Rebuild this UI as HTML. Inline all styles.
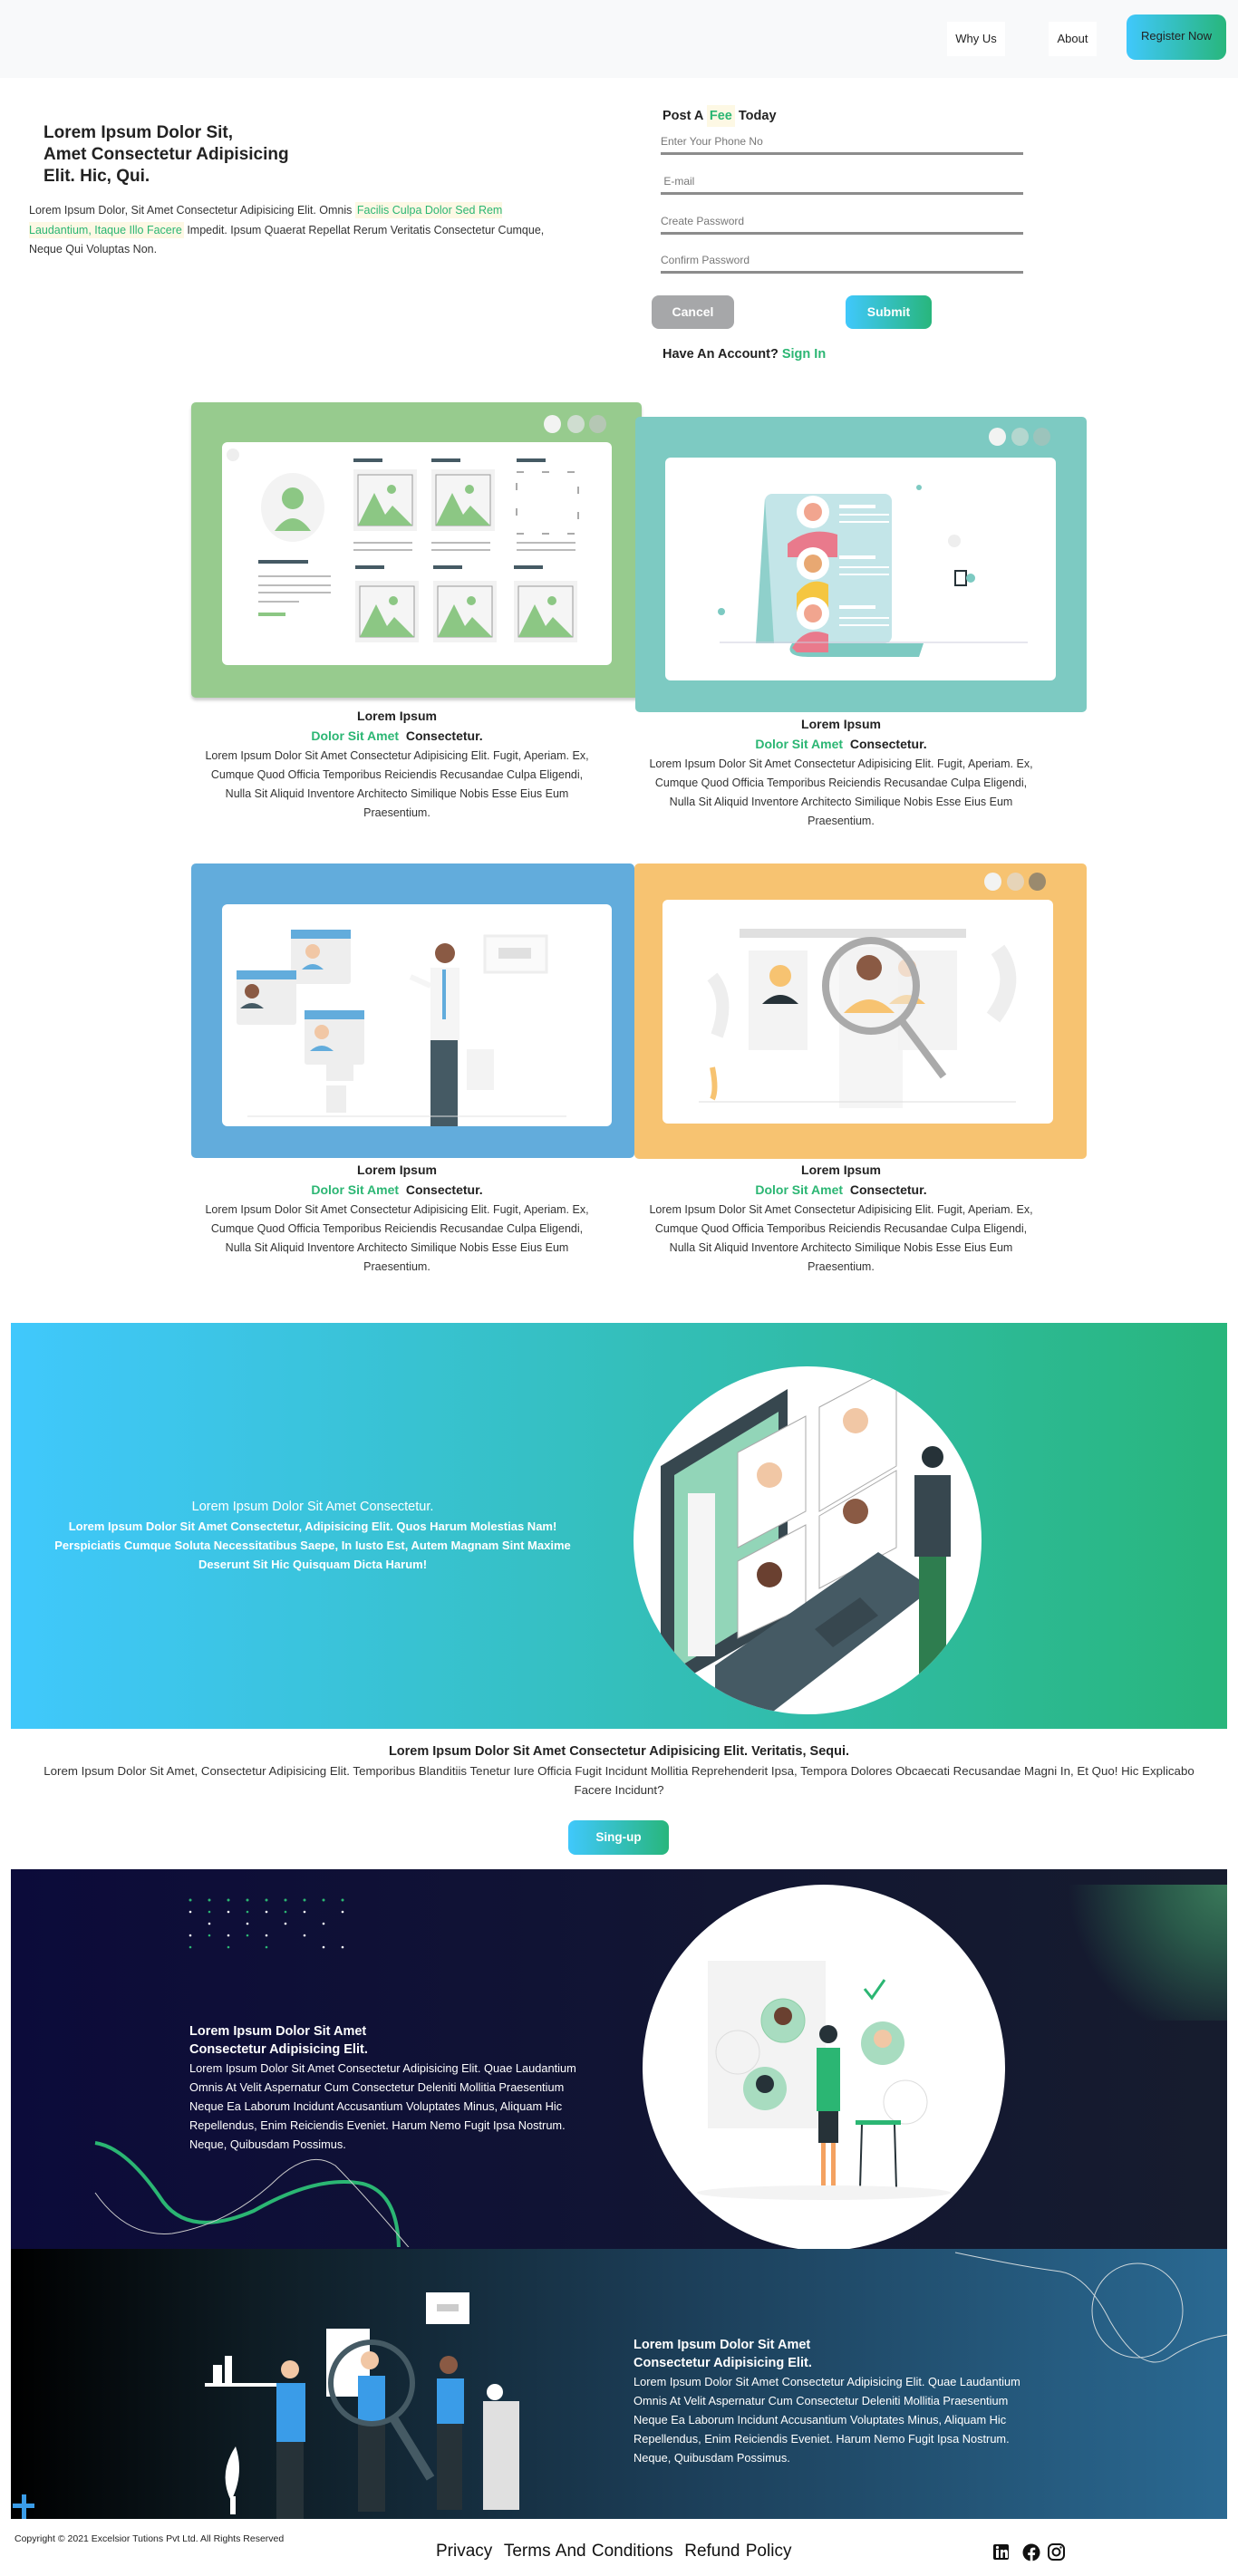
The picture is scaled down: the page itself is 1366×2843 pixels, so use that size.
<!DOCTYPE html>
<html><head><meta charset="utf-8"><style>
*{margin:0;padding:0;box-sizing:border-box}
body{width:1366px;height:2843px;position:relative;font-family:"Liberation Sans",sans-serif;color:#222;background:#fff;overflow:hidden}
.a{position:absolute}
.grad{background:linear-gradient(90deg,#40c8fc,#28b67c)}
.green{color:#2bb673}
.hl{background:#fdf8e4}
.ct{text-align:center;font-size:12.5px;line-height:21px;color:#333}
.ct b{font-size:14px;color:#222}
.card{position:absolute;border-radius:5px}
.inner{position:absolute;background:#fff;border-radius:6px}
.dot{position:absolute;width:19px;height:20px;border-radius:50%}
.lbl{position:absolute;left:729px;width:400px;font-size:12px;color:#777;border-bottom:3px solid #8c8c8c;height:22px}
</style></head><body>
<!-- header -->
<div class="a" style="left:0;top:0;width:1366px;height:86px;background:#f8f9fa"></div>
<div class="a" style="left:1045px;top:24px;width:64px;height:38px;background:#fff;font-size:13px;line-height:38px;text-align:center">Why Us</div>
<div class="a" style="left:1157px;top:24px;width:53px;height:38px;background:#fff;font-size:13px;line-height:38px;text-align:center">About</div>
<div class="a grad" style="left:1243px;top:16px;width:110px;height:50px;border-radius:10px;font-size:13px;line-height:48px;text-align:center">Register Now</div>

<!-- hero -->
<div class="a" style="left:48px;top:135px;font-size:19px;font-weight:bold;line-height:24px;color:#222">Lorem Ipsum Dolor Sit,<br>Amet Consectetur Adipisicing<br>Elit. Hic, Qui.</div>
<div class="a" style="left:32px;top:222px;width:590px;font-size:12.5px;line-height:21.5px;color:#333">Lorem Ipsum Dolor, Sit Amet Consectetur Adipisicing Elit. Omnis <span class="green hl" style="padding:2px">Facilis Culpa Dolor Sed Rem Laudantium, Itaque Illo Facere</span> Impedit. Ipsum Quaerat Repellat Rerum Veritatis Consectetur Cumque, Neque Qui Voluptas Non.</div>

<div class="a" style="left:731px;top:118px;font-size:14.5px;font-weight:bold;line-height:20px">Post A <span class="green hl" style="padding:4px 3px">Fee</span> Today</div>
<div class="lbl" style="top:149px">Enter Your Phone No</div>
<div class="lbl" style="top:193px">&nbsp;E-mail</div>
<div class="lbl" style="top:237px">Create Password</div>
<div class="lbl" style="top:280px">Confirm Password</div>
<div class="a" style="left:719px;top:326px;width:91px;height:37px;border-radius:8px;background:#a6a7a9;color:#fff;font-weight:bold;font-size:14px;line-height:37px;text-align:center">Cancel</div>
<div class="a grad" style="left:933px;top:326px;width:95px;height:37px;border-radius:8px;color:#fff;font-weight:bold;font-size:14px;line-height:37px;text-align:center">Submit</div>
<div class="a" style="left:731px;top:383px;font-size:14.5px;font-weight:bold">Have An Account? <span class="green">Sign In</span></div>

<!-- card 1 -->
<div class="card" style="left:211px;top:444px;width:497px;height:326px;background:#97cb8e;box-shadow:0 3px 3px #ccc"></div>
<div class="dot" style="left:600px;top:458px;background:#f2f3f2"></div><div class="dot" style="left:626px;top:458px;background:#cfddd0"></div><div class="dot" style="left:650px;top:458px;background:#b5c7b4"></div>
<div class="inner" style="left:245px;top:488px;width:430px;height:246px">
<svg width="430" height="246">
<circle cx="12" cy="14" r="7" fill="#eee"/>
<ellipse cx="78" cy="72" rx="35" ry="38" fill="#f3f3f3"/><circle cx="78" cy="62" r="12" fill="#8cc784"/><path d="M58 98 Q78 70 98 98 Z" fill="#8cc784"/>
<rect x="40" y="130" width="55" height="4" fill="#455a64"/><rect x="40" y="147" width="80" height="2" fill="#bbb"/><rect x="40" y="157" width="80" height="2" fill="#bbb"/><rect x="40" y="165" width="80" height="2" fill="#bbb"/><rect x="40" y="175" width="45" height="2" fill="#bbb"/><rect x="40" y="188" width="30" height="4" fill="#8cc784"/>
<g fill="#455a64"><rect x="145" y="18" width="32" height="4"/><rect x="231" y="18" width="32" height="4"/><rect x="325" y="18" width="32" height="4"/><rect x="147" y="136" width="32" height="4"/><rect x="233" y="136" width="32" height="4"/><rect x="322" y="136" width="32" height="4"/></g>
<g><rect x="145" y="30" width="70" height="68" fill="#f2f2f2"/><rect x="150" y="36" width="60" height="56" fill="#f5f5f5" stroke="#999"/><path d="M150 92 L168 56 L180 80 L188 70 L210 92Z" fill="#8cc784"/><circle cx="187" cy="52" r="5" fill="#8cc784"/></g>
<g transform="translate(86,0)"><rect x="145" y="30" width="70" height="68" fill="#f2f2f2"/><rect x="150" y="36" width="60" height="56" fill="#f5f5f5" stroke="#999"/><path d="M150 92 L168 56 L180 80 L188 70 L210 92Z" fill="#8cc784"/><circle cx="187" cy="52" r="5" fill="#8cc784"/></g>
<rect x="325" y="33" width="68" height="68" fill="none" stroke="#555" stroke-dasharray="8 20"/>
<g transform="translate(2,123)"><rect x="145" y="30" width="70" height="68" fill="#f2f2f2"/><rect x="150" y="36" width="60" height="56" fill="#f5f5f5" stroke="#999"/><path d="M150 92 L168 56 L180 80 L188 70 L210 92Z" fill="#8cc784"/><circle cx="187" cy="52" r="5" fill="#8cc784"/></g>
<g transform="translate(88,123)"><rect x="145" y="30" width="70" height="68" fill="#f2f2f2"/><rect x="150" y="36" width="60" height="56" fill="#f5f5f5" stroke="#999"/><path d="M150 92 L168 56 L180 80 L188 70 L210 92Z" fill="#8cc784"/><circle cx="187" cy="52" r="5" fill="#8cc784"/></g>
<g transform="translate(177,123)"><rect x="145" y="30" width="70" height="68" fill="#f2f2f2"/><rect x="150" y="36" width="60" height="56" fill="#f5f5f5" stroke="#999"/><path d="M150 92 L168 56 L180 80 L188 70 L210 92Z" fill="#8cc784"/><circle cx="187" cy="52" r="5" fill="#8cc784"/></g>
<g fill="#bbb"><rect x="145" y="110" width="65" height="2"/><rect x="145" y="118" width="65" height="2"/><rect x="231" y="110" width="65" height="2"/><rect x="231" y="118" width="65" height="2"/><rect x="325" y="110" width="65" height="2"/><rect x="325" y="118" width="65" height="2"/></g>
</svg></div>
<div class="a ct" style="left:223px;top:780px;width:430px"><b>Lorem Ipsum</b><br><b><span class="green">Dolor Sit Amet</span> &nbsp;Consectetur.</b><br>Lorem Ipsum Dolor Sit Amet Consectetur Adipisicing Elit. Fugit, Aperiam. Ex, Cumque Quod Officia Temporibus Reiciendis Recusandae Culpa Eligendi, Nulla Sit Aliquid Inventore Architecto Similique Nobis Esse Eius Eum Praesentium.</div>

<!-- card 2 -->
<div class="card" style="left:701px;top:460px;width:498px;height:326px;background:#7dcac2"></div>
<div class="dot" style="left:1091px;top:472px;background:#f2f3f2"></div><div class="dot" style="left:1116px;top:472px;background:#b4d7cf"></div><div class="dot" style="left:1140px;top:472px;background:#9cc4bc"></div>
<div class="inner" style="left:734px;top:505px;width:431px;height:246px">
<svg width="431" height="246">
<rect x="110" y="40" width="140" height="165" rx="8" fill="#c3e5e8"/><path d="M110 45 L100 205 L120 205Z" fill="#8fd0cb"/><path d="M140 205 Q130 220 160 220 L280 220 L285 205Z" fill="#7dcac2"/>
<circle cx="163" cy="60" r="18" fill="#fff"/><circle cx="163" cy="60" r="10" fill="#f1a58f"/><path d="M135 95 Q160 75 190 85 L190 110 L135 110Z" fill="#e97a8c"/>
<circle cx="163" cy="117" r="18" fill="#fff"/><circle cx="163" cy="117" r="10" fill="#e8a872"/><path d="M145 150 Q160 130 180 140 L180 170 L145 170Z" fill="#f5c641"/>
<circle cx="163" cy="172" r="18" fill="#fff"/><circle cx="163" cy="172" r="10" fill="#f1a58f"/><path d="M140 210 Q155 185 180 195 L180 215 L145 215Z" fill="#e97a8c"/>
<g fill="#fff"><rect x="192" y="52" width="40" height="4"/><rect x="192" y="62" width="55" height="2"/><rect x="192" y="70" width="55" height="2"/><rect x="192" y="108" width="40" height="4"/><rect x="192" y="120" width="55" height="2"/><rect x="192" y="128" width="55" height="2"/><rect x="192" y="163" width="40" height="4"/><rect x="192" y="176" width="55" height="2"/><rect x="192" y="184" width="55" height="2"/></g>
<rect x="258" y="65" width="14" height="15" fill="none" stroke="#fff" stroke-width="2"/><rect x="258" y="120" width="14" height="15" fill="none" stroke="#fff" stroke-width="2"/><rect x="258" y="175" width="14" height="15" fill="none" stroke="#fff" stroke-width="2"/>
<line x1="60" y1="204" x2="400" y2="204" stroke="#ccd" /><circle cx="62" cy="170" r="4" fill="#7dcac2"/><circle cx="280" cy="33" r="3" fill="#7dcac2"/><circle cx="319" cy="92" r="7" fill="#eee"/><rect x="320" y="125" width="12" height="16" fill="#fff" stroke="#263238" stroke-width="2"/><circle cx="337" cy="133" r="5" fill="#7dcac2"/>
</svg></div>
<div class="a ct" style="left:713px;top:789px;width:430px"><b>Lorem Ipsum</b><br><b><span class="green">Dolor Sit Amet</span> &nbsp;Consectetur.</b><br>Lorem Ipsum Dolor Sit Amet Consectetur Adipisicing Elit. Fugit, Aperiam. Ex, Cumque Quod Officia Temporibus Reiciendis Recusandae Culpa Eligendi, Nulla Sit Aliquid Inventore Architecto Similique Nobis Esse Eius Eum Praesentium.</div>

<!-- card 3 -->
<div class="card" style="left:211px;top:953px;width:489px;height:325px;background:#62acdc"></div>
<div class="inner" style="left:245px;top:998px;width:430px;height:245px">
<svg width="430" height="245">
<g><rect x="76" y="28" width="66" height="60" rx="3" fill="#eee"/><rect x="76" y="28" width="66" height="10" fill="#62acdc"/><circle cx="100" cy="52" r="8" fill="#f1c7a5"/><path d="M88 72 Q100 60 112 72Z" fill="#62acdc"/></g>
<g><rect x="16" y="73" width="66" height="60" rx="3" fill="#eee"/><rect x="16" y="73" width="66" height="10" fill="#62acdc"/><circle cx="33" cy="96" r="8" fill="#8a5a44"/><path d="M20 115 Q33 103 46 115Z" fill="#455a64"/></g>
<g><rect x="91" y="117" width="66" height="60" rx="3" fill="#eee"/><rect x="91" y="117" width="66" height="10" fill="#62acdc"/><circle cx="110" cy="141" r="8" fill="#f1c7a5"/><path d="M97 162 Q110 150 123 162Z" fill="#62acdc"/></g>
<rect x="290" y="35" width="68" height="40" fill="#fafafa" stroke="#eee" stroke-width="3"/><rect x="305" y="48" width="36" height="12" fill="#e0e0e0"/>
<circle cx="246" cy="54" r="11" fill="#8a5a44"/><path d="M230 70 L262 70 L262 150 L230 150Z" fill="#f5f5f5"/><rect x="243" y="72" width="4" height="55" fill="#62acdc"/><rect x="230" y="150" width="30" height="95" fill="#455a64"/><path d="M230 90 L208 80" stroke="#f5f5f5" stroke-width="6"/>
<rect x="115" y="165" width="30" height="30" fill="#eee"/><rect x="115" y="200" width="22" height="30" fill="#eee"/><rect x="270" y="160" width="30" height="45" fill="#f3f3f3"/>
<line x1="28" y1="234" x2="380" y2="234" stroke="#e0e0e0"/>
</svg></div>
<div class="a ct" style="left:223px;top:1281px;width:430px"><b>Lorem Ipsum</b><br><b><span class="green">Dolor Sit Amet</span> &nbsp;Consectetur.</b><br>Lorem Ipsum Dolor Sit Amet Consectetur Adipisicing Elit. Fugit, Aperiam. Ex, Cumque Quod Officia Temporibus Reiciendis Recusandae Culpa Eligendi, Nulla Sit Aliquid Inventore Architecto Similique Nobis Esse Eius Eum Praesentium.</div>

<!-- card 4 -->
<div class="card" style="left:700px;top:953px;width:499px;height:326px;background:#f7c371"></div>
<div class="dot" style="left:1086px;top:963px;background:#f2f3f2"></div><div class="dot" style="left:1111px;top:963px;background:#e6d4b8"></div><div class="dot" style="left:1135px;top:963px;background:#9a8a6e"></div>
<div class="inner" style="left:731px;top:993px;width:431px;height:247px">
<svg width="431" height="247">
<rect x="85" y="32" width="250" height="10" fill="#e0e0e0"/>
<rect x="95" y="56" width="65" height="110" fill="#f3f3f3"/><rect x="195" y="52" width="70" height="178" fill="#f5f5f5"/><rect x="260" y="56" width="65" height="110" fill="#f3f3f3"/>
<circle cx="130" cy="84" r="12" fill="#f7c371"/><path d="M110 115 Q130 95 150 115Z" fill="#263238"/>
<circle cx="270" cy="75" r="10" fill="#f1c7a5"/><path d="M250 115 Q270 95 290 115Z" fill="#f7c371"/>
<circle cx="230" cy="95" r="50" fill="#f2f2f2" fill-opacity=".5" stroke="#aaa" stroke-width="8"/><circle cx="228" cy="75" r="14" fill="#8a5a44"/><path d="M200 125 Q228 95 256 125Z" fill="#f7c371"/>
<path d="M265 135 L310 195" stroke="#aaa" stroke-width="8"/>
<path d="M370 55 Q395 90 365 130" stroke="#eee" stroke-width="18" fill="none"/><path d="M55 85 Q75 110 60 150" stroke="#eee" stroke-width="14" fill="none"/>
<path d="M55 185 Q60 210 55 220" stroke="#f7c371" stroke-width="6"/>
<line x1="40" y1="223" x2="390" y2="223" stroke="#ddd"/>
</svg></div>
<div class="a ct" style="left:713px;top:1281px;width:430px"><b>Lorem Ipsum</b><br><b><span class="green">Dolor Sit Amet</span> &nbsp;Consectetur.</b><br>Lorem Ipsum Dolor Sit Amet Consectetur Adipisicing Elit. Fugit, Aperiam. Ex, Cumque Quod Officia Temporibus Reiciendis Recusandae Culpa Eligendi, Nulla Sit Aliquid Inventore Architecto Similique Nobis Esse Eius Eum Praesentium.</div>

<!-- gradient banner -->
<div class="a grad" style="left:12px;top:1460px;width:1342px;height:448px"></div>
<div class="a" style="left:40px;top:1652px;width:610px;text-align:center;color:#fff;font-size:13px;line-height:21px"><span style="font-size:14.5px">Lorem Ipsum Dolor Sit Amet Consectetur.</span><br><b>Lorem Ipsum Dolor Sit Amet Consectetur, Adipisicing Elit. Quos Harum Molestias Nam! Perspiciatis Cumque Soluta Necessitatibus Saepe, In Iusto Est, Autem Magnam Sint Maxime Deserunt Sit Hic Quisquam Dicta Harum!</b></div>
<div class="a" style="left:699px;top:1508px;width:384px;height:384px;border-radius:50%;background:#fff;overflow:hidden">
<svg width="384" height="384">
<path d="M30 110 L170 25 L170 280 L30 360Z" fill="#37474f"/><path d="M45 120 L160 50 L160 265 L45 335Z" fill="#92d5b8"/>
<rect x="60" y="140" width="30" height="180" fill="#f5f5f5"/>
<path d="M115 95 L190 55 L190 160 L115 200Z" fill="#fff" stroke="#aaa"/><circle cx="150" cy="120" r="14" fill="#f1c7a5"/>
<path d="M205 45 L290 0 L290 110 L205 160Z" fill="#fff" stroke="#aaa"/><circle cx="245" cy="60" r="14" fill="#f1c7a5"/>
<path d="M205 165 L290 115 L290 200 L205 245Z" fill="#fff" stroke="#aaa"/><circle cx="245" cy="160" r="14" fill="#8a5a44"/>
<path d="M115 215 L190 175 L190 265 L115 300Z" fill="#fff" stroke="#aaa"/><circle cx="150" cy="230" r="14" fill="#6a4030"/>
<path d="M90 330 L270 205 L330 245 L150 384 L90 384Z" fill="#455a64"/><path d="M200 290 L250 255 L270 275 L220 310Z" fill="#37474f"/>
<circle cx="330" cy="100" r="12" fill="#263238"/><rect x="310" y="120" width="40" height="90" fill="#37474f"/><rect x="315" y="210" width="30" height="130" fill="#2e7d4f"/>
</svg></div>

<div class="a" style="left:0;top:1925px;width:1366px;text-align:center;font-size:14.5px;font-weight:bold;color:#222">Lorem Ipsum Dolor Sit Amet Consectetur Adipisicing Elit. Veritatis, Sequi.</div>
<div class="a" style="left:30px;top:1944px;width:1306px;text-align:center;font-size:13.3px;line-height:21px;color:#333">Lorem Ipsum Dolor Sit Amet, Consectetur Adipisicing Elit. Temporibus Blanditiis Tenetur Iure Officia Fugit Incidunt Mollitia Reprehenderit Ipsa, Tempora Dolores Obcaecati Recusandae Magni In, Et Quo! Hic Explicabo Facere Incidunt?</div>
<div class="a grad" style="left:627px;top:2009px;width:111px;height:38px;border-radius:8px;color:#fff;font-weight:bold;font-size:13.5px;line-height:38px;text-align:center">Sing-up</div>

<!-- dark section 1 -->
<div class="a" style="left:12px;top:2063px;width:1342px;height:419px;background:linear-gradient(90deg,#0c0b3a,#121632 60%,#161c2e)"></div>
<svg class="a" style="left:200px;top:2093px" width="200" height="60"><g fill="#2bb673"><circle cx="10" cy="4" r="1.5"/><circle cx="31" cy="4" r="1.5"/><circle cx="52" cy="4" r="1.5"/><circle cx="73" cy="4" r="1.5"/><circle cx="94" cy="4" r="1.5"/><circle cx="115" cy="4" r="1.5"/><circle cx="136" cy="4" r="1.5"/><circle cx="157" cy="4" r="1.5"/><circle cx="178" cy="4" r="1.5"/></g><g fill="#fff"><circle cx="10" cy="17" r="1.3"/><circle cx="52" cy="17" r="1.3"/><circle cx="94" cy="17" r="1.3"/><circle cx="136" cy="17" r="1.3"/><circle cx="178" cy="17" r="1.3"/><circle cx="31" cy="30" r="1.3"/><circle cx="73" cy="30" r="1.3"/><circle cx="115" cy="30" r="1.3"/><circle cx="157" cy="30" r="1.3"/><circle cx="10" cy="43" r="1.3"/><circle cx="52" cy="43" r="1.3"/><circle cx="94" cy="43" r="1.3"/><circle cx="136" cy="43" r="1.3"/><circle cx="178" cy="56" r="1.3"/><circle cx="157" cy="56" r="1.3"/></g><g fill="#2bb673"><circle cx="31" cy="17" r="1.3"/><circle cx="73" cy="17" r="1.3"/><circle cx="115" cy="17" r="1.3"/><circle cx="10" cy="56" r="1.3"/><circle cx="52" cy="56" r="1.3"/><circle cx="94" cy="56" r="1.3"/><circle cx="31" cy="43" r="1.3"/><circle cx="73" cy="43" r="1.3"/></g></svg>
<div class="a" style="left:1175px;top:2080px;width:179px;height:150px;background:radial-gradient(circle at 100% 0,#3a7a5a 0,#2a5a4a 30%,rgba(20,30,46,0) 75%)"></div>
<svg class="a" style="left:100px;top:2360px" width="380" height="120"><path d="M5 5 Q40 10 80 70 Q110 110 180 80 Q250 40 300 50 Q340 60 340 125" stroke="#2bb673" stroke-width="4" fill="none"/><path d="M5 60 Q40 110 90 105 Q150 95 200 50 Q240 10 270 30 Q300 60 355 125" stroke="#ccc" stroke-width="1" fill="none"/></svg>
<div class="a" style="left:209px;top:2232px;width:430px;color:#fff;font-size:12.8px;line-height:21px"><div style="font-size:14.5px;font-weight:bold;line-height:20px">Lorem Ipsum Dolor Sit Amet<br>Consectetur Adipisicing Elit.</div>Lorem Ipsum Dolor Sit Amet Consectetur Adipisicing Elit. Quae Laudantium Omnis At Velit Aspernatur Cum Consectetur Deleniti Mollitia Praesentium Neque Ea Laborum Incidunt Accusantium Voluptates Minus, Aliquam Hic Repellendus, Enim Reiciendis Eveniet. Harum Nemo Fugit Ipsa Nostrum. Neque, Quibusdam Possimus.</div>
<div class="a" style="left:709px;top:2080px;width:400px;height:404px;border-radius:50%;background:#fff;overflow:hidden">
<svg width="400" height="404">
<rect x="72" y="84" width="130" height="185" fill="#f3f3f3"/>
<circle cx="155" cy="150" r="24" fill="#a8dcc0" stroke="#8fd0a8"/><circle cx="155" cy="145" r="10" fill="#6a4030"/>
<circle cx="265" cy="175" r="24" fill="#a8dcc0"/><circle cx="265" cy="170" r="10" fill="#f1c7a5"/>
<circle cx="135" cy="225" r="24" fill="#a8dcc0"/><circle cx="135" cy="220" r="10" fill="#263238"/>
<circle cx="105" cy="185" r="24" fill="none" stroke="#ddd"/><circle cx="290" cy="240" r="24" fill="none" stroke="#ddd"/>
<path d="M245 115 l8 10 l14 -20" stroke="#2bb673" stroke-width="3" fill="none"/>
<circle cx="205" cy="165" r="10" fill="#263238"/><rect x="192" y="180" width="26" height="70" fill="#2bb673"/><rect x="194" y="250" width="22" height="35" fill="#263238"/><rect x="197" y="285" width="5" height="50" fill="#f4a261"/><rect x="208" y="285" width="5" height="50" fill="#f4a261"/>
<rect x="235" y="260" width="50" height="5" fill="#2bb673"/><line x1="242" y1="265" x2="240" y2="335" stroke="#263238" stroke-width="2"/><line x1="278" y1="265" x2="280" y2="335" stroke="#263238" stroke-width="2"/>
<ellipse cx="200" cy="340" rx="140" ry="8" fill="#f3f3f3"/>
</svg></div>

<!-- dark section 2 -->
<div class="a" style="left:12px;top:2482px;width:1342px;height:298px;background:linear-gradient(90deg,#000 0%,#0e1c24 20%,#1c3e58 55%,#2a6992 100%)"></div>
<svg class="a" style="left:1050px;top:2482px" width="304" height="180"><path d="M4 4 Q80 20 120 25 Q150 30 175 80 Q210 140 240 120 Q270 100 304 95" stroke="#cfd8dc" fill="none"/><ellipse cx="205" cy="68" rx="50" ry="52" stroke="#cfd8dc" fill="none"/></svg>
<svg class="a" style="left:220px;top:2530px" width="380" height="250">
<rect x="140" y="40" width="48" height="75" fill="#fff"/><rect x="250" y="0" width="48" height="35" fill="#fff"/><rect x="262" y="13" width="24" height="8" fill="#ccc"/>
<rect x="6" y="100" width="90" height="4" fill="#fff"/><rect x="15" y="80" width="10" height="20" fill="#fff"/><rect x="28" y="70" width="8" height="30" fill="#fff"/>
<circle cx="100" cy="85" r="10" fill="#f1c7a5"/><rect x="85" y="100" width="32" height="65" fill="#3a9ce8"/><rect x="85" y="165" width="30" height="85" fill="#263238"/>
<circle cx="188" cy="75" r="10" fill="#f1c7a5"/><rect x="175" y="92" width="30" height="50" fill="#3a9ce8"/><rect x="175" y="142" width="30" height="100" fill="#263238"/>
<circle cx="190" cy="100" r="45" fill="none" stroke="#455a64" stroke-width="6"/><path d="M215 140 L255 205" stroke="#455a64" stroke-width="10"/>
<circle cx="275" cy="80" r="10" fill="#8a5a44"/><rect x="262" y="95" width="30" height="50" fill="#3a9ce8"/><rect x="262" y="145" width="28" height="95" fill="#263238"/>
<rect x="313" y="120" width="40" height="120" fill="#e0e0e0"/><circle cx="326" cy="110" r="9" fill="#fff"/>
<path d="M40 170 Q20 200 35 230 Q50 200 40 170Z" fill="#fff"/><rect x="34" y="225" width="6" height="20" fill="#fff"/>
</svg>
<div class="a" style="left:699px;top:2578px;width:430px;color:#fff;font-size:12.8px;line-height:21px"><div style="font-size:14.5px;font-weight:bold;line-height:20px">Lorem Ipsum Dolor Sit Amet<br>Consectetur Adipisicing Elit.</div>Lorem Ipsum Dolor Sit Amet Consectetur Adipisicing Elit. Quae Laudantium Omnis At Velit Aspernatur Cum Consectetur Deleniti Mollitia Praesentium Neque Ea Laborum Incidunt Accusantium Voluptates Minus, Aliquam Hic Repellendus, Enim Reiciendis Eveniet. Harum Nemo Fugit Ipsa Nostrum. Neque, Quibusdam Possimus.</div>
<div class="a" style="left:14px;top:2763px;width:24px;height:5px;background:#3a9ce8"></div>
<div class="a" style="left:24px;top:2753px;width:5px;height:27px;background:#3a9ce8"></div>

<!-- footer -->
<div class="a" style="left:16px;top:2796px;font-size:10.5px;color:#222">Copyright © 2021 Excelsior Tutions Pvt Ltd. All Rights Reserved</div>
<div class="a" style="left:481px;top:2805px;font-size:19px;color:#111;word-spacing:1px">Privacy &nbsp;Terms And Conditions &nbsp;Refund Policy</div>
<svg class="a" style="left:1095px;top:2806px" width="90" height="22">
<rect x="1" y="2" width="17" height="17" rx="2" fill="#111"/><rect x="4" y="8" width="3" height="9" fill="#fff"/><circle cx="5.5" cy="5.5" r="1.6" fill="#fff"/><path d="M9 8 h3 v1.5 q1-1.8 3-1.6 q2 .2 2 3 V17 h-3 v-5 q0-1.5-1.2-1.5 t-1.3 1.5 V17 H9Z" fill="#fff"/>
<circle cx="43" cy="11" r="9.5" fill="#111"/><path d="M44.5 21 v-7 h2.3 l.4-2.8 h-2.7 v-1.7 q0-1.2 1.2-1.2 h1.6 V5.8 q-1-.2-2.3-.2 q-3.3 0-3.3 3.3 v2.3 h-2.5 V14 h2.5 v7Z" fill="#fff"/>
<rect x="62" y="2" width="17" height="17" rx="5" fill="none" stroke="#111" stroke-width="2"/><circle cx="70.5" cy="10.5" r="4" fill="none" stroke="#111" stroke-width="2"/><circle cx="75.5" cy="5.5" r="1.2" fill="#111"/>
</svg>
</body></html>
